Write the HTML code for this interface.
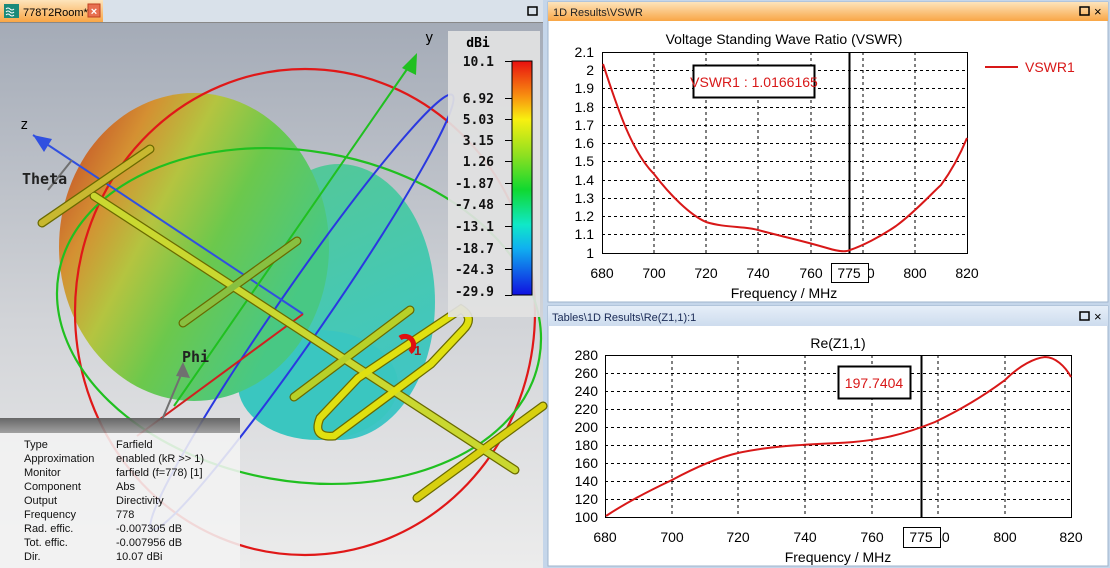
<!DOCTYPE html>
<html><head><meta charset="utf-8"><style>
html,body{margin:0;padding:0;width:1110px;height:568px;overflow:hidden;background:#c5d6ea}
svg{display:block}
</style></head><body>
<svg width="1110" height="568" viewBox="0 0 1110 568" xmlns="http://www.w3.org/2000/svg" font-family="Liberation Sans, sans-serif">
<defs>
<linearGradient id="bg3d" x1="0" y1="0" x2="0" y2="1"><stop offset="0" stop-color="#a4abb7"/><stop offset="0.55" stop-color="#d2d4d8"/><stop offset="1" stop-color="#ececec"/></linearGradient>
<linearGradient id="blob" x1="0" y1="0.2" x2="1" y2="0.8"><stop offset="0" stop-color="#c45028"/><stop offset="0.18" stop-color="#d49032"/><stop offset="0.35" stop-color="#b4c440"/><stop offset="0.55" stop-color="#6cc84c"/><stop offset="0.85" stop-color="#48c884"/></linearGradient>
<linearGradient id="lobe" x1="0" y1="0" x2="0.3" y2="1"><stop offset="0" stop-color="#50c890"/><stop offset="0.6" stop-color="#40c8b0"/><stop offset="1" stop-color="#38c4c4"/></linearGradient>
<linearGradient id="cb" x1="0" y1="0" x2="0" y2="1"><stop offset="0" stop-color="#e81010"/><stop offset="0.15" stop-color="#f89010"/><stop offset="0.25" stop-color="#f8f010"/><stop offset="0.4" stop-color="#90e020"/><stop offset="0.55" stop-color="#10d830"/><stop offset="0.7" stop-color="#10e8c8"/><stop offset="0.8" stop-color="#10b0f0"/><stop offset="1" stop-color="#1010e0"/></linearGradient>
<linearGradient id="orange" x1="0" y1="0" x2="0" y2="1"><stop offset="0" stop-color="#fde4bc"/><stop offset="1" stop-color="#f9a646"/></linearGradient>
<linearGradient id="lblue" x1="0" y1="0" x2="0" y2="1"><stop offset="0" stop-color="#e6eef8"/><stop offset="1" stop-color="#cddcee"/></linearGradient>
<linearGradient id="gbar" x1="0" y1="0" x2="0" y2="1"><stop offset="0" stop-color="#5a5a5a"/><stop offset="1" stop-color="#9a9a9a"/></linearGradient>
</defs>

<rect x="0" y="0" width="543" height="568" fill="#d8dee6"/>
<rect x="0" y="0" width="543" height="22" fill="#d9e1ea"/>
<rect x="0" y="0" width="103" height="22" fill="url(#orange)"/>
<rect x="4" y="4" width="15" height="14" fill="#1a8a7a"/>
<path d="M6 9 q2-2 4 0 t4 0 M6 12 q2-2 4 0 t4 0 M6 15 q2-2 4 0 t4 0" stroke="#fff" stroke-width="1" fill="none"/>
<text x="23" y="16" font-size="11" fill="#000">778T2Room*</text>
<rect x="88" y="4" width="12" height="13" fill="#e87050" stroke="#c04020"/>
<text x="94" y="15" font-size="11" fill="#fff" text-anchor="middle" font-weight="bold">×</text>
<rect x="528" y="7" width="9" height="8" fill="none" stroke="#000" stroke-width="1.5"/>
<rect x="0" y="22" width="543" height="546" fill="url(#bg3d)"/>
<line x1="0" y1="22.5" x2="543" y2="22.5" stroke="#888"/>

<ellipse cx="339" cy="302" rx="96" ry="138" fill="url(#lobe)" opacity="0.95"/>
<ellipse cx="318" cy="385" rx="80" ry="55" fill="#3ac6c0"/>
<ellipse cx="194" cy="247" rx="135" ry="154" fill="url(#blob)"/>

<ellipse cx="305" cy="312" rx="230" ry="243" fill="none" stroke="#e01818" stroke-width="2.2"/>
<ellipse cx="299" cy="316" rx="244" ry="165" transform="rotate(10 299 316)" fill="none" stroke="#20c020" stroke-width="2.2"/>
<ellipse cx="302" cy="312" rx="264" ry="24" transform="rotate(-55.3 302 312)" fill="none" stroke="#2a38e0" stroke-width="2"/>

<line x1="303" y1="314" x2="33" y2="135" stroke="#3050e0" stroke-width="2"/>
<polygon points="33,135 52,139 44,152" fill="#3050e0"/>
<line x1="174" y1="406" x2="412" y2="62" stroke="#20c020" stroke-width="2"/>
<polygon points="417,53 416,75 402,68" fill="#20c020"/>
<line x1="137" y1="436" x2="303" y2="314" stroke="#d02020" stroke-width="2"/>
<line x1="162" y1="420" x2="183" y2="370" stroke="#707070" stroke-width="2"/>
<polygon points="183,362 190,378 176,376" fill="#707070"/>
<line x1="72" y1="160" x2="48" y2="190" stroke="#707070" stroke-width="2"/>
<text x="20" y="129" font-size="14" font-family="DejaVu Sans Mono, monospace">z</text>
<text x="425" y="42" font-size="14" font-family="DejaVu Sans Mono, monospace">y</text>
<text x="22" y="184" font-size="15" font-weight="bold" font-family="DejaVu Sans Mono, monospace" fill="#222">Theta</text>
<text x="182" y="362" font-size="15" font-weight="bold" font-family="DejaVu Sans Mono, monospace" fill="#222">Phi</text>

<g stroke-linecap="round" fill="none">
<g stroke="#6a6a00" stroke-width="9">
<line x1="42" y1="223" x2="150" y2="149"/>
<line x1="94" y1="196" x2="515" y2="470"/>
<line x1="183" y1="323" x2="297" y2="241"/>
<line x1="294" y1="397" x2="410" y2="310"/>
<line x1="417" y1="498" x2="543" y2="406"/>
<path d="M358 378 L461 309 Q475 318 463 330 L431 364 L334 436 Q312 438 320 418 Z"/>
</g>
<g stroke="#d8d010" stroke-width="6.5">
<line x1="42" y1="223" x2="150" y2="149" stroke="#c8b830"/>
<line x1="94" y1="196" x2="515" y2="470" stroke="#cad830"/>
<line x1="183" y1="323" x2="297" y2="241" stroke="#88c040"/>
<line x1="294" y1="397" x2="410" y2="310" stroke="#b8d028"/>
<line x1="417" y1="498" x2="543" y2="406"/>
<path d="M358 378 L461 309 Q475 318 463 330 L431 364 L334 436 Q312 438 320 418 Z" stroke="#e0e010"/>
</g>
</g>
<path d="M400 338 a8 8 0 0 1 10 14" stroke="#e01010" stroke-width="5" fill="none"/>
<text x="414" y="355" font-size="13" fill="#a02020" font-weight="bold">1</text>

<rect x="448" y="31" width="92" height="286" fill="#e2e2e2" opacity="0.92"/>
<text x="478" y="47" font-size="13" font-weight="bold" font-family="DejaVu Sans Mono, monospace" text-anchor="middle">dBi</text>
<rect x="512" y="61" width="20" height="234" fill="url(#cb)" stroke="#000"/>
<g font-size="13" font-weight="bold" font-family="DejaVu Sans Mono, monospace" text-anchor="end" fill="#111">
<text x="494" y="66">10.1</text><text x="494" y="103">6.92</text><text x="494" y="124">5.03</text><text x="494" y="145">3.15</text><text x="494" y="166">1.26</text><text x="494" y="188">-1.87</text><text x="494" y="209">-7.48</text><text x="494" y="231">-13.1</text><text x="494" y="253">-18.7</text><text x="494" y="274">-24.3</text><text x="494" y="296">-29.9</text>
</g>
<g stroke="#000">
<line x1="505" y1="61.5" x2="512" y2="61.5"/><line x1="505" y1="98.5" x2="512" y2="98.5"/><line x1="505" y1="119.5" x2="512" y2="119.5"/><line x1="505" y1="140.5" x2="512" y2="140.5"/><line x1="505" y1="161.5" x2="512" y2="161.5"/><line x1="505" y1="183.5" x2="512" y2="183.5"/><line x1="505" y1="204.5" x2="512" y2="204.5"/><line x1="505" y1="226.5" x2="512" y2="226.5"/><line x1="505" y1="248.5" x2="512" y2="248.5"/><line x1="505" y1="269.5" x2="512" y2="269.5"/><line x1="505" y1="295.5" x2="512" y2="295.5"/>
</g>

<rect x="0" y="418" width="240" height="15" fill="url(#gbar)" opacity="0.9"/>
<rect x="0" y="433" width="240" height="135" fill="#f2f2f2" opacity="0.88"/>
<g font-size="11" fill="#111">
<text x="24" y="448">Type</text><text x="116" y="448">Farfield</text>
<text x="24" y="462">Approximation</text><text x="116" y="462">enabled (kR &gt;&gt; 1)</text>
<text x="24" y="476">Monitor</text><text x="116" y="476">farfield (f=778) [1]</text>
<text x="24" y="490">Component</text><text x="116" y="490">Abs</text>
<text x="24" y="504">Output</text><text x="116" y="504">Directivity</text>
<text x="24" y="518">Frequency</text><text x="116" y="518">778</text>
<text x="24" y="532">Rad. effic.</text><text x="116" y="532">-0.007305 dB</text>
<text x="24" y="546">Tot. effic.</text><text x="116" y="546">-0.007956 dB</text>
<text x="24" y="560">Dir.</text><text x="116" y="560">10.07 dBi</text>
</g>

<rect x="548" y="2" width="560" height="300" fill="#fff" stroke="#9fb4cc"/>
<rect x="548" y="2" width="560" height="19" fill="url(#orange)"/>
<text x="553" y="16" font-size="11" fill="#222">1D Results\VSWR</text>
<rect x="1080" y="7" width="9" height="8" fill="none" stroke="#000" stroke-width="1.5"/>
<text x="1094" y="16" font-size="13" fill="#000">×</text>
<text x="784" y="44" font-size="14" text-anchor="middle">Voltage Standing Wave Ratio (VSWR)</text>
<g stroke="#000" stroke-dasharray="3,3" stroke-width="1">
<line x1="654" y1="52" x2="654" y2="253"/><line x1="706" y1="52" x2="706" y2="253"/><line x1="758" y1="52" x2="758" y2="253"/><line x1="811" y1="52" x2="811" y2="253"/><line x1="863" y1="52" x2="863" y2="253"/><line x1="915" y1="52" x2="915" y2="253"/>
<line x1="602" y1="70.5" x2="967" y2="70.5"/><line x1="602" y1="88.5" x2="967" y2="88.5"/><line x1="602" y1="107.5" x2="967" y2="107.5"/><line x1="602" y1="125.5" x2="967" y2="125.5"/><line x1="602" y1="143.5" x2="967" y2="143.5"/><line x1="602" y1="161.5" x2="967" y2="161.5"/><line x1="602" y1="180.5" x2="967" y2="180.5"/><line x1="602" y1="198.5" x2="967" y2="198.5"/><line x1="602" y1="216.5" x2="967" y2="216.5"/><line x1="602" y1="234.5" x2="967" y2="234.5"/>
</g>
<rect x="602.5" y="52.5" width="365" height="201" fill="none" stroke="#000"/>
<g font-size="14" text-anchor="end">
<text x="594" y="57">2.1</text><text x="594" y="75">2</text><text x="594" y="93">1.9</text><text x="594" y="112">1.8</text><text x="594" y="130">1.7</text><text x="594" y="148">1.6</text><text x="594" y="166">1.5</text><text x="594" y="185">1.4</text><text x="594" y="203">1.3</text><text x="594" y="221">1.2</text><text x="594" y="239">1.1</text><text x="594" y="258">1</text>
</g>
<g font-size="14" text-anchor="middle">
<text x="602" y="278">680</text><text x="654" y="278">700</text><text x="706" y="278">720</text><text x="758" y="278">740</text><text x="811" y="278">760</text><text x="863" y="278">780</text><text x="915" y="278">800</text><text x="967" y="278">820</text>
</g>
<rect x="831.5" y="263.5" width="37" height="19" fill="#fff" stroke="#000"/>
<text x="849" y="278" font-size="14" text-anchor="middle">775</text>
<text x="784" y="298" font-size="14" text-anchor="middle">Frequency / MHz</text>
<line x1="849.5" y1="52" x2="849.5" y2="253" stroke="#000" stroke-width="2"/>
<path d="M603 64 C615 100 630 150 654 174 C670 195 690 215 706 222 C725 228 745 226 758 230 C780 236 800 240 827 248 C840 252 846 252 850 250 C862 246 880 237 896 226 C915 212 930 195 941 185 C952 170 960 155 967 138" fill="none" stroke="#d81818" stroke-width="2"/>
<rect x="693.5" y="65.5" width="121" height="32" fill="#fff" stroke="#000" stroke-width="2"/>
<text x="754" y="87" font-size="14" fill="#d81818" text-anchor="middle">VSWR1 : 1.0166165</text>
<line x1="985" y1="67" x2="1018" y2="67" stroke="#d81818" stroke-width="2"/>
<text x="1025" y="72" font-size="14" fill="#d81818">VSWR1</text>

<rect x="548" y="306" width="560" height="260" fill="#fff" stroke="#9fb4cc"/>
<rect x="548" y="306" width="560" height="20" fill="url(#lblue)"/>
<text x="552" y="321" font-size="11" fill="#1a2a55">Tables\1D Results\Re(Z1,1):1</text>
<rect x="1080" y="312" width="9" height="8" fill="none" stroke="#000" stroke-width="1.5"/>
<text x="1094" y="321" font-size="13" fill="#000">×</text>
<text x="838" y="348" font-size="14" text-anchor="middle">Re(Z1,1)</text>
<g stroke="#000" stroke-dasharray="3,3" stroke-width="1">
<line x1="672" y1="355" x2="672" y2="517"/><line x1="738" y1="355" x2="738" y2="517"/><line x1="805" y1="355" x2="805" y2="517"/><line x1="872" y1="355" x2="872" y2="517"/><line x1="938" y1="355" x2="938" y2="517"/><line x1="1005" y1="355" x2="1005" y2="517"/>
<line x1="605" y1="373.5" x2="1072" y2="373.5"/><line x1="605" y1="391.5" x2="1072" y2="391.5"/><line x1="605" y1="409.5" x2="1072" y2="409.5"/><line x1="605" y1="427.5" x2="1072" y2="427.5"/><line x1="605" y1="445.5" x2="1072" y2="445.5"/><line x1="605" y1="463.5" x2="1072" y2="463.5"/><line x1="605" y1="481.5" x2="1072" y2="481.5"/><line x1="605" y1="499.5" x2="1072" y2="499.5"/>
</g>
<rect x="605.5" y="355.5" width="466" height="162" fill="none" stroke="#000"/>
<g font-size="14" text-anchor="end">
<text x="598" y="360">280</text><text x="598" y="378">260</text><text x="598" y="396">240</text><text x="598" y="414">220</text><text x="598" y="432">200</text><text x="598" y="450">180</text><text x="598" y="468">160</text><text x="598" y="486">140</text><text x="598" y="504">120</text><text x="598" y="522">100</text>
</g>
<g font-size="14" text-anchor="middle">
<text x="605" y="542">680</text><text x="672" y="542">700</text><text x="738" y="542">720</text><text x="805" y="542">740</text><text x="872" y="542">760</text><text x="938" y="542">780</text><text x="1005" y="542">800</text><text x="1071" y="542">820</text>
</g>
<rect x="903.5" y="527.5" width="37" height="20" fill="#fff" stroke="#000"/>
<text x="921" y="542" font-size="14" text-anchor="middle">775</text>
<text x="838" y="562" font-size="14" text-anchor="middle">Frequency / MHz</text>
<line x1="921.5" y1="355" x2="921.5" y2="517" stroke="#000" stroke-width="2"/>
<path d="M606 516 C630 500 655 488 672 480 C700 465 720 457 738 453 C770 446 800 445 838 443 C880 441 905 434 935 422 C960 410 985 395 1005 380 C1020 365 1035 358 1045 357 C1055 357 1065 366 1071 377" fill="none" stroke="#d81818" stroke-width="2"/>
<rect x="838.5" y="366.5" width="72" height="32" fill="#fff" stroke="#000" stroke-width="2"/>
<text x="874" y="388" font-size="14" fill="#d81818" text-anchor="middle">197.7404</text>
</svg>
</body></html>
